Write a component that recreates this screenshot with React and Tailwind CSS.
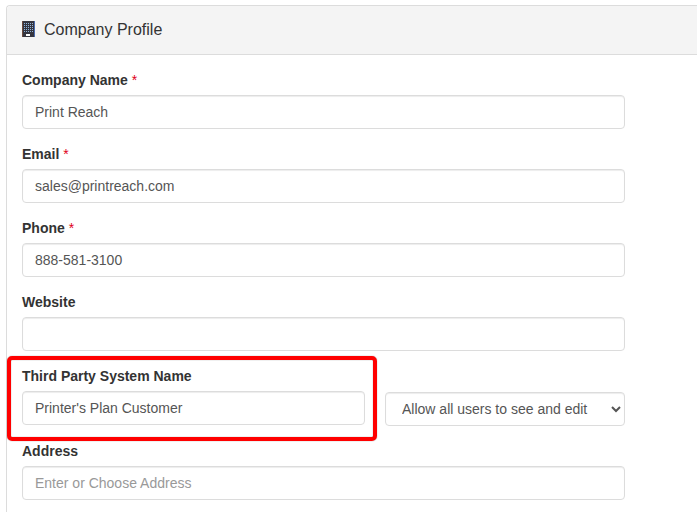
import React, { useState } from "react";

const controlStyle =
  "block w-full h-[34px] rounded border border-[#dcdcdc] bg-white text-sm text-[#555] shadow-[inset_0_1px_1px_rgba(0,0,0,0.075)] outline-none";

const BuildingIcon = () => (
  <svg width="14" height="18" viewBox="0 0 14 18" aria-hidden="true">
    <rect width="12" height="16" fill="#35353f" />
    <rect x="0" width="1" height="16" fill="#6b4a3c" />
    <rect x="12" width="1" height="16" fill="#4a6cb0" />
    <g fill="#8fb4dc" shapeRendering="crispEdges">
      {[2, 4, 6, 8, 10].map((y) =>
        [2, 4, 6, 8, 10].map((x) => (
          <rect key={`${x}-${y}`} x={x} y={y} width="1" height="1" />
        ))
      )}
    </g>
    <rect x="4" y="13" width="4" height="2" fill="#fff" />
  </svg>
);

const Field = ({ id, label, required, type = "text", placeholder, value, onChange }) => (
  <div>
    <label htmlFor={id} className="block mb-[5px] text-sm leading-5 font-bold text-[#333]">
      {label}
      {required && <span className="font-normal text-[#e00020]"> *</span>}
    </label>
    <input
      id={id}
      name={id}
      type={type}
      placeholder={placeholder}
      value={value}
      onChange={onChange}
      className={`${controlStyle} px-3 placeholder:text-[#999]`}
    />
  </div>
);

const App = () => {
  const [profile, setProfile] = useState({
    company: "Print Reach",
    email: "sales@printreach.com",
    phone: "888-581-3100",
    website: "",
    thirdParty: "Printer's Plan Customer",
    access: "all",
    address: "",
  });

  const bind = (name) => ({
    id: name,
    value: profile[name],
    onChange: (e) => setProfile({ ...profile, [name]: e.target.value }),
  });

  return (
    <div className="h-screen overflow-hidden bg-white pt-[5px] pl-1.5 font-['Liberation_Sans',Arial,sans-serif]">
      <section className="min-h-full rounded-tl border-t border-l border-[#dcdcdc]">
        {/* Panel heading */}
        <header className="flex items-center gap-2 rounded-tl border-b border-[#dcdcdc] bg-[#f4f4f4] px-[15px] py-3">
          <BuildingIcon />
          <h1 className="text-base leading-6 text-[#333]">Company Profile</h1>
        </header>

        <form className="flex flex-col gap-[15px] pt-[15px] pl-[15px] pr-[72px]">
          <Field label="Company Name" required {...bind("company")} />
          <Field label="Email" required type="email" {...bind("email")} />
          <Field label="Phone" required type="tel" {...bind("phone")} />
          <Field label="Website" {...bind("website")} />

          <div className="flex items-end gap-5">
            <div className="relative flex-1 pb-px">
              <Field label="Third Party System Name" {...bind("thirdParty")} />
              {/* Highlight frame */}
              <div className="pointer-events-none absolute -top-2.5 -left-[15px] -right-3 -bottom-[15px] rounded-[5px] border-4 border-[#f00] shadow-[0_0_1px_rgba(0,0,0,0.6),inset_0_0_1px_rgba(0,0,0,0.6)]" />
            </div>
            <select
              {...bind("access")}
              aria-label="Third party access"
              className={`${controlStyle} max-w-60 px-3`}
            >
              <option value="all">Allow all users to see and edit</option>
              <option value="view">Allow all users to see</option>
              <option value="admin">Admins only</option>
            </select>
          </div>

          <Field label="Address" placeholder="Enter or Choose Address" {...bind("address")} />
        </form>
      </section>
    </div>
  );
};

export default App;
